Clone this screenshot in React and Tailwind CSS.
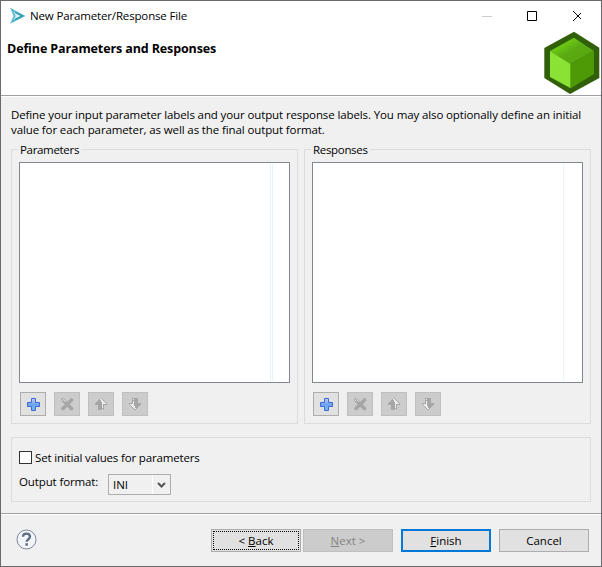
import React from "react";

function Label({ className = "", children }) {
  return <span className={"block whitespace-nowrap " + className}>{children}</span>;
}

function PlusIcon() {
  return (
    <svg width="14" height="14" viewBox="0 0 14 14">
      <defs>
        <linearGradient id="plus" x1="0" y1="0" x2="0" y2="1">
          <stop offset="0" stopColor="#c3cffb" />
          <stop offset=".5" stopColor="#6fa3f3" />
          <stop offset="1" stopColor="#6fc0fb" />
        </linearGradient>
      </defs>
      <path d="M5.500 1.500h4v4h4v4h-4v4h-4v-4h-4v-4h4z" fill="url(#plus)" stroke="#3f68d6" />
    </svg>
  );
}

function CrossIcon() {
  return (
    <svg width="14" height="14" viewBox="0 0 14 14">
      <path d="M3 3l8.500 8.500M11.500 3L3 11.500" stroke="#a6a6a6" strokeWidth="3.600" strokeLinecap="round" />
      <path d="M2 3h1v-1h1v1h1v1h1v1H5V4H4V3H3v1H2z" fill="#dedede" />
    </svg>
  );
}

function UpIcon() {
  return (
    <svg width="14" height="14" viewBox="0 0 14 14" shapeRendering="crispEdges">
      <path d="M7 1h1v1h1v1h1v1h1v1h1v1h1v2h-3v5H4V8H1V6h1V5h1V4h1V3h1V2h2z" fill="#a6a6a6" />
      <path d="M6 2h2v1h1v1h1v1h1v1h1v1H9v4H8V5H7V3H6zM8 12h1v1H8z" fill="#ebebeb" />
    </svg>
  );
}

function DownIcon() {
  return (
    <svg width="14" height="14" viewBox="0 0 14 14" shapeRendering="crispEdges">
      <path d="M4 1h6v5h3v2h-1v1h-1v1h-1v1H9v1H8v1H6v-1H5v-1H4v-1H3V9H2V8H1V6h3z" fill="#a6a6a6" />
      <path d="M5 2h1v1H5zM5 4h1v5h1v2h1v1H6v-1H5v-1H4V9H3V8H2V7h3z" fill="#ebebeb" />
    </svg>
  );
}

function ToolButton({ disabled, children }) {
  return (
    <button
      className={
        "flex h-6 w-[26px] items-center justify-center border " +
        (disabled ? "border-[#bfbfbf] bg-[#cccccc]" : "border-[#adadad] bg-[#e1e1e1]")
      }
    >
      {children}
    </button>
  );
}

function ListGroup({ title, doubled }) {
  return (
    <fieldset className="relative h-[275px] w-[287px] border border-[#dcdcdc] px-[7px] pt-3">
      <Label className="absolute -top-[8px] left-[6px] bg-[#f0f0f0] px-[2px] leading-4 tracking-[-0.320px]">{title}</Label>
      <div className="flex h-[221px] w-[271px] justify-end border border-[#828790] bg-white py-px">
        <div className={doubled ? "mr-4 w-[3px] border-x border-[#e5f1fb]" : "mr-[18px] w-px bg-[#edf3fa]"} />
      </div>
      <div className="ml-px mt-[9px] flex gap-2">
        <ToolButton><PlusIcon /></ToolButton>
        <ToolButton disabled><CrossIcon /></ToolButton>
        <ToolButton disabled><UpIcon /></ToolButton>
        <ToolButton disabled><DownIcon /></ToolButton>
      </div>
    </fieldset>
  );
}

export default function App() {
  return (
    <div className="flex h-[567px] w-[602px] flex-col overflow-hidden border border-[#6b696b] bg-[#f0f0f0] font-['Open_Sans','Noto_Sans',sans-serif] text-[11.500px] text-black">
      <header className="h-[94px] shrink-0 bg-white">
        <div className="flex h-[29px] items-center pl-[9px]">
          <svg width="16" height="16" viewBox="0 0 16 16">
            <path d="M.5 0L15.500 8 .5 15.500 3.500 8z" fill="#45b4cb" />
            <path d="M.5 0l3.500 8L.5 15.500" fill="none" stroke="#8ccbd9" />
            <path d="M3.500 3l8 5-8 4L5.500 8z" fill="#d5eff4" />
            <path d="M5 4.500L12 8l-7 3.200" fill="none" stroke="#23879c" />
          </svg>
          <Label className="ml-[4px] w-[431px] tracking-[-0.150px]">New Parameter/Response File</Label>
          <svg width="120" height="12" viewBox="0 0 120 12" fill="none">
            <path d="M21 6.500h10" stroke="#cccccc" />
            <path d="M66.500 1.500h9v9h-9z" stroke="#000" />
            <path d="M112 1l10 10M122 1l-10 10" stroke="#000" />
          </svg>
        </div>
        <div className="flex justify-between">
          <Label className="ml-[6px] mt-[10px] text-[12.500px] font-bold leading-[18px] tracking-[-0.120px]">Define Parameters and Responses</Label>
          <svg className="mr-px mt-px" width="56" height="64" viewBox="0 0 56 64">
            <defs>
              <linearGradient id="top" x1="0" y1="0" x2="1" y2="1">
                <stop offset="0" stopColor="#73d216" />
                <stop offset=".2" stopColor="#73d216" />
                <stop offset=".5" stopColor="#5aaa12" />
                <stop offset="1" stopColor="#56a40d" />
              </linearGradient>
            </defs>
            <path d="M30 .7L55.300 16.800V47L26 63 .3 47V17z" fill="#315f0a" />
            <path d="M30 6.700L50 20 26.700 33 6 20z" fill="url(#top)" />
            <path d="M6 20L26.700 33V57.300L6 46z" fill="#8ae234" />
            <path d="M50 20L26.700 33V57.300L50 43z" fill="#4e9a06" />
          </svg>
        </div>
      </header>
      <div className="h-[2px] shrink-0 border-t border-b border-t-[#a0a0a0] border-b-white" />
      <main className="h-[416px] shrink-0 px-[10px] pt-[10px]">
        <Label className="leading-[15px] tracking-[-0.115px]">Define your input parameter labels and your output response labels. You may also optionally define an initial</Label>
        <Label className="leading-[15px] tracking-[-0.115px]">value for each parameter, as well as the final output format.</Label>
        <div className="mt-3 flex gap-[6px]">
          <ListGroup title="Parameters" doubled />
          <ListGroup title="Responses" />
        </div>
        <section className="mt-[13px] h-[65px] w-[580px] border border-[#dcdcdc] pl-[7px] pt-3">
          <div className="flex h-[15px] items-center">
            <span className="h-[13px] w-[13px] border border-[#333] bg-white" />
            <Label className="ml-[3px] tracking-[-0.160px]">Set initial values for parameters</Label>
          </div>
          <div className="mt-[9px] flex">
            <Label className="w-[89px] leading-4 tracking-[-0.120px]">Output format:</Label>
            <div className="flex h-[21px] w-[63px] items-center border border-[#adadad] pl-1">
              <Label>INI</Label>
              <span className="ml-auto flex h-[19px] w-[18px] items-center justify-center border-l border-white">
                <svg width="9" height="6" viewBox="0 0 9 6"><path d="M1 1l3.500 3.500L8 1" fill="none" stroke="#555" strokeWidth="2" /></svg>
              </span>
            </div>
          </div>
        </section>
      </main>
      <div className="h-[2px] shrink-0 border-t border-b border-t-[#a0a0a0] border-b-white" />
      <footer className="flex pl-[15px] pt-[14px]">
        <svg className="mr-[174px]" width="21" height="21" viewBox="0 0 21 21">
          <circle cx="10.500" cy="10.500" r="9.500" fill="#f3f5f8" stroke="#7b8799" />
          <path d="M7 7.800c0-4.200 7-4.200 7 0 0 2.500-3.300 2.300-3.300 4.900" stroke="#5c6c88" strokeWidth="2.300" fill="none" />
          <path d="M9.400 14.200h2.500v2.500H9.400z" fill="#5c6c88" />
        </svg>
        <button className="h-[23px] w-[90px] border border-[#adadad] bg-[#e1e1e1] p-px">
          <span className="flex h-full items-center justify-center border border-dotted border-black"><Label className="pt-px">&lt; <u>B</u>ack</Label></span>
        </button>
        <button className="ml-[2px] h-[23px] w-[90px] border border-[#bfbfbf] bg-[#cccccc] text-[#838383]">
          <Label className="pt-px"><u>N</u>ext &gt;</Label>
        </button>
        <button className="ml-2 h-[23px] w-[90px] border-2 border-[#0078d7] bg-[#e1e1e1]">
          <Label className="pt-px"><u>F</u>inish</Label>
        </button>
        <button className="ml-2 h-[23px] w-[90px] border border-[#adadad] bg-[#e1e1e1]">
          <Label className="pt-px">Cancel</Label>
        </button>
      </footer>
    </div>
  );
}
